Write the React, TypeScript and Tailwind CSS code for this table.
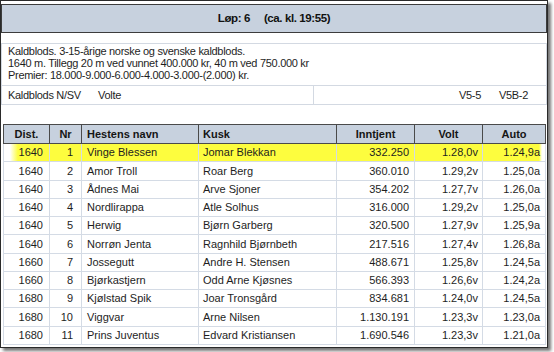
import React from "react";

interface Rad {
	dist: string,
	nr: string,
	navn: string,
	kusk: string,
	inntjent: string,
	volt: string,
	auto: string
}

const rader: Rad[] = [
	{ dist: "1640", nr: "1", navn: "Vinge Blessen", kusk: "Jomar Blekkan", inntjent: "332.250", volt: "1.28,0v", auto: "1.24,9a" },
	{ dist: "1640", nr: "2", navn: "Amor Troll", kusk: "Roar Berg", inntjent: "360.010", volt: "1.29,2v", auto: "1.25,0a" },
	{ dist: "1640", nr: "3", navn: "Ådnes Mai", kusk: "Arve Sjoner", inntjent: "354.202", volt: "1.27,7v", auto: "1.26,0a" },
	{ dist: "1640", nr: "4", navn: "Nordlirappa", kusk: "Atle Solhus", inntjent: "316.000", volt: "1.29,2v", auto: "1.25,0a" },
	{ dist: "1640", nr: "5", navn: "Herwig", kusk: "Bjørn Garberg", inntjent: "320.500", volt: "1.27,9v", auto: "1.25,9a" },
	{ dist: "1640", nr: "6", navn: "Norrøn Jenta", kusk: "Ragnhild Bjørnbeth", inntjent: "217.516", volt: "1.27,4v", auto: "1.26,8a" },
	{ dist: "1660", nr: "7", navn: "Jossegutt", kusk: "Andre H. Stensen", inntjent: "488.671", volt: "1.25,8v", auto: "1.24,5a" },
	{ dist: "1660", nr: "8", navn: "Bjørkastjern", kusk: "Odd Arne Kjøsnes", inntjent: "566.393", volt: "1.26,6v", auto: "1.24,2a" },
	{ dist: "1680", nr: "9", navn: "Kjølstad Spik", kusk: "Joar Tronsgård", inntjent: "834.681", volt: "1.24,0v", auto: "1.24,5a" },
	{ dist: "1680", nr: "10", navn: "Viggvar", kusk: "Arne Nilsen", inntjent: "1.130.191", volt: "1.23,3v", auto: "1.23,0a" },
	{ dist: "1680", nr: "11", navn: "Prins Juventus", kusk: "Edvard Kristiansen", inntjent: "1.690.546", volt: "1.23,3v", auto: "1.21,0a" },
];

const kol = "grid grid-cols-[47px_32px_117px_138px_78px_68px_63px]";

function App() {
	return (
		<div className="w-[554px] h-[352px] bg-white font-['Liberation_Sans',Arial,sans-serif] text-[11px] text-[#1e1e1e]">
			<div className="w-[548px] h-[348px] border border-[#2a2a2a] shadow-[3px_3px_3px_rgba(0,0,0,0.55)] bg-white flex flex-col">
				{/* tittel */}
				<div className="mt-[3px] h-[29px] border border-[#3c3c3c] bg-[#c7d1de] flex items-center justify-center font-bold text-[11.5px] tracking-[-0.4px] text-[#111]">
					<span>Løp: 6</span>
					<span className="ml-[14px]">(ca. kl. 19:55)</span>
				</div>
				{/* løpsinfo */}
				<div className="mt-[10px] border border-[#d3d9e2] flex flex-col tracking-[-0.3px]">
					<div className="pt-[1px] pb-[4px] px-[6px] leading-[12px] border-b border-[#d3d9e2]">
						<p>Kaldblods. 3-15-årige norske og svenske kaldblods.</p>
						<p>1640 m. Tillegg 20 m ved vunnet 400.000 kr, 40 m ved 750.000 kr</p>
						<p>Premier: 18.000-9.000-6.000-4.000-3.000-(2.000) kr.</p>
					</div>
					<div className="flex h-[18px] items-center">
						<div className="w-[312px] h-full flex items-center pl-[6px] border-r border-[#d3d9e2]">
							<span className="w-[90px]">Kaldblods N/SV</span>
							<span>Volte</span>
						</div>
						<div className="flex-1 flex justify-end pr-[18px]">
							<span>V5-5</span>
							<span className="ml-[5px] w-[42px] text-right">V5B-2</span>
						</div>
					</div>
				</div>
				{/* startliste */}
				<div className="mt-[19px] ml-[2px] w-[543px]">
					<div className={`${kol} h-[20px] bg-[#c7d1de] border-y border-[#4a4a4a] font-bold text-[#151515]`}>
						<div className="border-l border-r border-[#4a4a4a] flex items-center justify-center">Dist.</div>
						<div className="border-r border-[#4a4a4a] flex items-center justify-center">Nr</div>
						<div className="border-r border-[#4a4a4a] flex items-center pl-[5px]">Hestens navn</div>
						<div className="border-r border-[#4a4a4a] flex items-center pl-[4px]">Kusk</div>
						<div className="border-r border-[#4a4a4a] flex items-center justify-center">Inntjent</div>
						<div className="border-r border-[#4a4a4a] flex items-center justify-center">Volt</div>
						<div className="border-r border-[#4a4a4a] flex items-center justify-center">Auto</div>
					</div>
					{rader.map((r, i) => {
						const gul = i === 0;
						return (
							<div key={r.nr} className={`${kol} h-[18.25px] ${gul ? "bg-[#fdfd3e]" : ""}`}>
								<div className={`border-l border-r border-b border-[#d4dbe5] flex items-center justify-end pr-[6px] ${gul ? "bg-[linear-gradient(to_right,#ffffff_6px,#fdfd3e_14px)]" : ""}`}>{r.dist}</div>
								<div className="border-r border-b border-[#d4dbe5] flex items-center justify-end pr-[8px]">{r.nr}</div>
								<div className="border-r border-b border-[#d4dbe5] flex items-center pl-[5px]">{r.navn}</div>
								<div className="border-r border-b border-[#d4dbe5] flex items-center pl-[4px]">{r.kusk}</div>
								<div className="border-r border-b border-[#d4dbe5] flex items-center justify-end pr-[5px]">{r.inntjent}</div>
								<div className="border-r border-b border-[#d4dbe5] flex items-center justify-end pr-[4px]">{r.volt}</div>
								<div className={`border-r border-b border-[#d4dbe5] flex items-center justify-end pr-[5px] ${gul ? "bg-[linear-gradient(to_left,#ffffff_3px,#fdfd3e_6px)]" : ""}`}>{r.auto}</div>
							</div>
						);
					})}
				</div>
			</div>
		</div>
	);
}

export default App;
